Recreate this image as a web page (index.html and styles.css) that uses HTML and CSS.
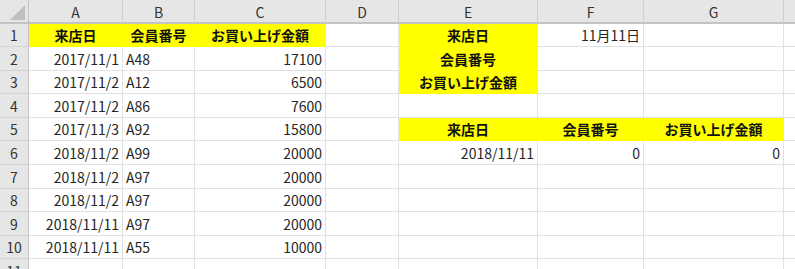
FILE: index.html
```html
<!DOCTYPE html>
<html lang="ja">
<head>
  <meta charset="UTF-8" />
  <title>来店データ</title>
  <link rel="stylesheet" href="styles.css">
</head>
<body>
  <div class="sheet">
    <!-- column headers -->
    <div class="row">
      <div class="corner">
        <svg width="28" height="23" viewBox="0 0 28 23"><polygon points="25,5 25,20 10,20" fill="#bfbfbf"/></svg>
      </div>
      <div class="colhead">A</div>
      <div class="colhead">B</div>
      <div class="colhead">C</div>
      <div class="colhead">D</div>
      <div class="colhead">E</div>
      <div class="colhead">F</div>
      <div class="colhead">G</div>
      <div class="colhead"></div>
    </div>

    <div class="row">
      <div class="rowhead">1</div>
      <div class="cell title">来店日</div>
      <div class="cell title">会員番号</div>
      <div class="cell title">お買い上げ金額</div>
      <div class="cell"></div>
      <div class="cell title">来店日</div>
      <div class="cell num">11月11日</div>
      <div class="cell"></div>
      <div class="cell"></div>
    </div>

    <div class="row">
      <div class="rowhead">2</div>
      <div class="cell num">2017/11/1</div>
      <div class="cell">A48</div>
      <div class="cell num">17100</div>
      <div class="cell"></div>
      <div class="cell title">会員番号</div>
      <div class="cell"></div>
      <div class="cell"></div>
      <div class="cell"></div>
    </div>

    <div class="row">
      <div class="rowhead">3</div>
      <div class="cell num">2017/11/2</div>
      <div class="cell">A12</div>
      <div class="cell num">6500</div>
      <div class="cell"></div>
      <div class="cell title">お買い上げ金額</div>
      <div class="cell"></div>
      <div class="cell"></div>
      <div class="cell"></div>
    </div>

    <div class="row">
      <div class="rowhead">4</div>
      <div class="cell num">2017/11/2</div>
      <div class="cell">A86</div>
      <div class="cell num">7600</div>
      <div class="cell"></div>
      <div class="cell"></div>
      <div class="cell"></div>
      <div class="cell"></div>
      <div class="cell"></div>
    </div>

    <div class="row">
      <div class="rowhead">5</div>
      <div class="cell num">2017/11/3</div>
      <div class="cell">A92</div>
      <div class="cell num">15800</div>
      <div class="cell"></div>
      <div class="cell title">来店日</div>
      <div class="cell title">会員番号</div>
      <div class="cell title">お買い上げ金額</div>
      <div class="cell"></div>
    </div>

    <div class="row">
      <div class="rowhead">6</div>
      <div class="cell num">2018/11/2</div>
      <div class="cell">A99</div>
      <div class="cell num">20000</div>
      <div class="cell"></div>
      <div class="cell num">2018/11/11</div>
      <div class="cell num">0</div>
      <div class="cell num">0</div>
      <div class="cell"></div>
    </div>

    <div class="row">
      <div class="rowhead">7</div>
      <div class="cell num">2018/11/2</div>
      <div class="cell">A97</div>
      <div class="cell num">20000</div>
      <div class="cell"></div>
      <div class="cell"></div>
      <div class="cell"></div>
      <div class="cell"></div>
      <div class="cell"></div>
    </div>

    <div class="row">
      <div class="rowhead">8</div>
      <div class="cell num">2018/11/2</div>
      <div class="cell">A97</div>
      <div class="cell num">20000</div>
      <div class="cell"></div>
      <div class="cell"></div>
      <div class="cell"></div>
      <div class="cell"></div>
      <div class="cell"></div>
    </div>

    <div class="row">
      <div class="rowhead">9</div>
      <div class="cell num">2018/11/11</div>
      <div class="cell">A97</div>
      <div class="cell num">20000</div>
      <div class="cell"></div>
      <div class="cell"></div>
      <div class="cell"></div>
      <div class="cell"></div>
      <div class="cell"></div>
    </div>

    <div class="row">
      <div class="rowhead">10</div>
      <div class="cell num">2018/11/11</div>
      <div class="cell">A55</div>
      <div class="cell num">10000</div>
      <div class="cell"></div>
      <div class="cell"></div>
      <div class="cell"></div>
      <div class="cell"></div>
      <div class="cell"></div>
    </div>

    <div class="row">
      <div class="rowhead">11</div>
      <div class="cell"></div>
      <div class="cell"></div>
      <div class="cell"></div>
      <div class="cell"></div>
      <div class="cell"></div>
      <div class="cell"></div>
      <div class="cell"></div>
      <div class="cell"></div>
    </div>
  </div>
</body>
</html>
```

FILE: styles.css
```css
body {
  margin: 0;
  background-color: #ffffff;
  font-family: "Noto Sans CJK JP", "Noto Sans", sans-serif;
  font-size: 14px;
  color: #262626;
  overflow: hidden;
}

.sheet {
  display: grid;
  grid-template-columns: 29px 94px 72px 131px 73px 139px 106px 140px 40px;
  grid-template-rows: 24px 23px 24px 23px 24px 23px 24px 24px 23px 24px 23px 24px;
  width: 795px;
  height: 269px;
  overflow: hidden;
}

.row {
  display: contents;
}

.corner,
.colhead,
.rowhead,
.cell {
  box-sizing: border-box;
  display: flex;
  align-items: center;
  white-space: nowrap;
  overflow: hidden;
  line-height: 1;
}

.corner {
  background-color: #e6e6e6;
  border-right: 1px solid #c4c4c4;
  border-bottom: 2px solid #c4c4c4;
}

.corner svg {
  display: block;
}

.colhead {
  justify-content: center;
  background-color: #e6e6e6;
  color: #333333;
  border-right: 1px solid #cfcfcf;
  border-bottom: 2px solid #c4c4c4;
  padding-top: 1px;
}

.rowhead {
  justify-content: center;
  background-color: #e6e6e6;
  color: #333333;
  border-right: 1px solid #c4c4c4;
  border-bottom: 1px solid #d4d4d4;
}

.cell {
  padding: 0 3px;
  border-right: 1px solid #e1e1e1;
  border-bottom: 1px solid #e1e1e1;
}

.num {
  justify-content: flex-end;
}

.title {
  justify-content: center;
  background-color: #ffff00;
  border-color: #ffff00;
  font-weight: bold;
  color: #111111;
}
```
